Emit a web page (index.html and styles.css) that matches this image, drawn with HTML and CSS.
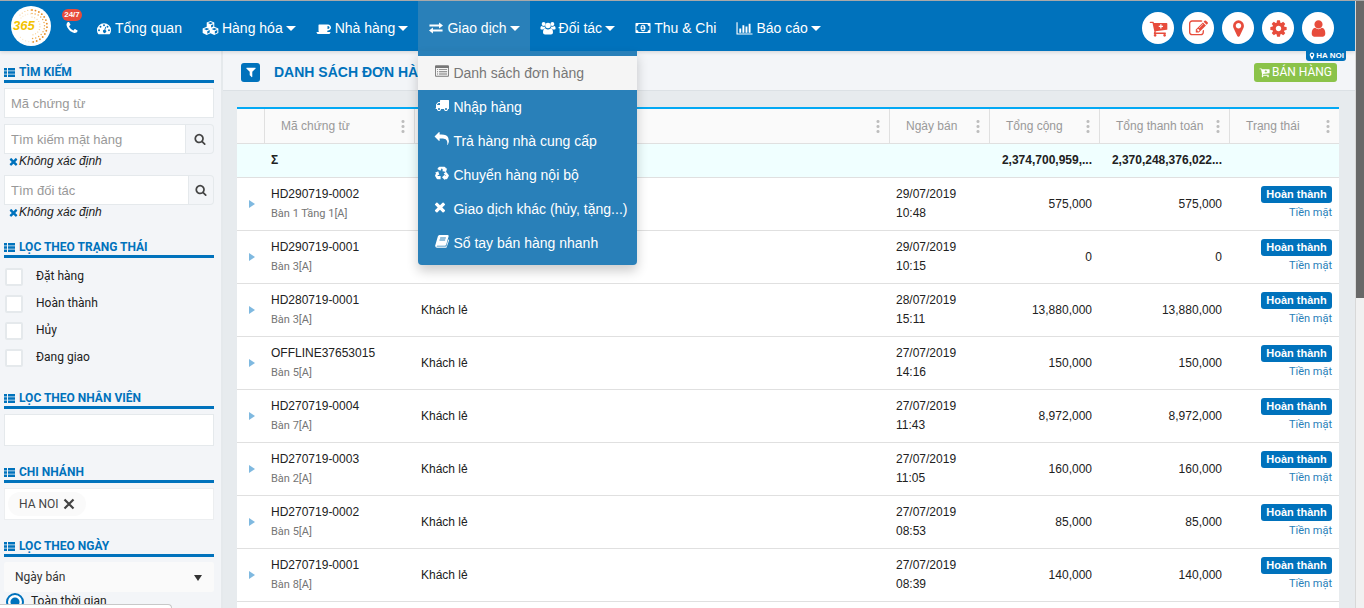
FILE: index.html
```html
<!DOCTYPE html>
<html lang="vi">
<head>
<meta charset="utf-8">
<title>Danh sách đơn hàng</title>
<link rel="stylesheet" href="styles.css">
</head>
<body>
<svg class="sprite" aria-hidden="true">
  <symbol id="phone" viewBox="0 0 1792 1792"><path d="M1600 1240q0 27-10 70.500t-21 68.500q-21 50-122 106-94 51-186 51-27 0-53-3.500t-57.500-12.500-47-14.500-55.500-20.500-49-18q-98-35-175-83-127-79-264-216t-216-264q-48-77-83-175-3-9-18-49t-20.500-55.500-14.500-47-12.500-57.500-3.500-53q0-92 51-186 56-101 106-122 25-11 68.500-21t70.500-10q14 0 21 3 18 6 53 76 11 19 30 54t35 63.500 31 53.500q3 4 17.500 25t21.500 35.500 7 28.500q0 20-28.500 50t-62 55-62 53-28.500 46q0 9 5 22.500t8.500 20.500 14 24 11.500 19q76 137 174 235t235 174q2 1 19 11.500t24 14 20.500 8.500 22.500 5q18 0 46-28.500t53-62 55-62 50-28.500q14 0 28.500 7t35.500 21.500 25 17.500q25 15 53.500 31t63.500 35 54 30q70 35 76 53 3 7 3 21z"/></symbol>
  <symbol id="gauge" viewBox="0 0 16 16"><path fill-rule="evenodd" d="M8 2.500a8 8 0 0 0-8 8 8 8 0 0 0 1.200 4.200q.2.300.5.300h12.600q.3 0 .5-.3A8 8 0 0 0 16 10.500a8 8 0 0 0-8-8zM2.300 9.400a1.100 1.100 0 1 1 0 2.200 1.100 1.100 0 0 1 0-2.200zM4 5.400a1.100 1.100 0 1 1 0 2.200 1.100 1.100 0 0 1 0-2.200zM8 3.700a1.100 1.100 0 1 1 0 2.200 1.100 1.100 0 0 1 0-2.200zM12 5.400a1.100 1.100 0 1 1 0 2.200 1.100 1.100 0 0 1 0-2.200zM13.700 9.400a1.100 1.100 0 1 1 0 2.200 1.100 1.100 0 0 1 0-2.200zM9.500 6.500l.9.300-.9 3.500a1.800 1.800 0 1 1-1-.2z"/></symbol>
  <symbol id="cubes" viewBox="0 0 18 16"><path fill-rule="evenodd" d="M9 .6l4 1.700v4.500l4.300 1.800v4.700L13 15.400l-4-1.900-4 1.900-4.300-2.100V8.600L5 6.800V2.300zM6.400 2.800L9 3.900l2.600-1.100L9 1.700zM9.600 5v2.500l2.300-1V4zM2.100 9.100L5 10.300l2.800-1.200L5 7.900zM5.600 11.400v2.600l2.600-1.300v-2.500zM10.200 9.100l2.800 1.200 2.900-1.200L13 7.900zM13.600 11.400v2.600l2.600-1.300v-2.500z"/></symbol>
  <symbol id="coffee" viewBox="0 0 1920 1792"><path d="M1664 832q0-80-56-136t-136-56h-64v384h64q80 0 136-56t56-136zm-1664 576h1792q0 106-75 181t-181 75h-1280q-106 0-181-75t-75-181zm1856-576q0 159-112.500 271.500t-271.500 112.500h-64v32q0 92-66 158t-158 66h-704q-92 0-158-66t-66-158v-736q0-26 19-45t45-19h1152q159 0 271.500 112.500t112.500 271.500z"/></symbol>
  <symbol id="exchange" viewBox="0 0 16 16"><path d="M.5 4h11V1.600L16 5.100l-4.500 3.500V6.200H.5zM15.500 9.800h-11V7.400L0 10.900l4.500 3.500V12h11z"/></symbol>
  <symbol id="users" viewBox="0 0 18 16"><circle cx="4" cy="3.400" r="2.200"/><circle cx="14" cy="3.400" r="2.200"/><circle cx="9" cy="5.200" r="3.100"/><path d="M1.600 5.600Q3.500 7 5.200 6.200q.2 1.300.9 2.200Q4 8.600 3.400 9.800H1.500Q.3 9.600.3 8.300q0-2.200 1.300-2.700zM16.400 5.600Q14.500 7 12.800 6.200q-.2 1.300-.9 2.200 2.100.2 2.700 1.400h1.900q1.200-.2 1.200-1.500 0-2.200-1.300-2.700zM6.200 8.600q2.800 2 5.600 0 2.900.3 2.900 4.500 0 2.400-2.300 2.400H5.600q-2.300 0-2.300-2.400 0-4.200 2.900-4.500z"/></symbol>
  <symbol id="money" viewBox="0 0 1920 1792"><path d="M768 1152h384v-96h-128v-448h-114l-148 137 77 80q42-37 55-57h2v288h-128v96zm512-256q0 70-21 142t-59.500 134-101.500 101-138 39-138-39-101.500-101-59.500-134-21-142 21-142 59.500-134 101.500-101 138-39 138 39 101.500 101 59.500 134 21 142zm512 256v-512q-106 0-181-75t-75-181h-1152q0 106-75 181t-181 75v512q106 0 181 75t75 181h1152q0-106 75-181t181-75zm128-832v1152q0 26-19 45t-45 19h-1792q-26 0-45-19t-19-45v-1152q0-26 19-45t45-19h1792q26 0 45 19t19 45z"/></symbol>
  <symbol id="chart" viewBox="0 0 18 16"><path d="M.5 2h1.200v11.800H17.500V15H.5zM3.500 8.500h2V13h-2zM6.800 5h2v8h-2zM10.100 6.500h2V13h-2zM13.400 3.500h2V13h-2z"/></symbol>
  <symbol id="list-alt" viewBox="0 0 16 16"><path fill-rule="evenodd" d="M1.200 1.500h13.600q1.200 0 1.200 1.200v10.600q0 1.200-1.200 1.200H1.200Q0 14.500 0 13.300V2.700Q0 1.500 1.200 1.500zM1 4.500v8.800h14V4.500zM2.300 5.600h1.200v1.100H2.300zM4.600 5.600h9.200v1.100H4.600zM2.300 8.200h1.200v1.100H2.300zM4.600 8.200h9.200v1.100H4.600zM2.300 10.800h1.200v1.100H2.300zM4.600 10.800h9.200v1.100H4.600z"/></symbol>
  <symbol id="truck" viewBox="0 0 1792 1792"><path d="M640 1408q0-52-38-90t-90-38-90 38-38 90 38 90 90 38 90-38 38-90zm-384-512h384v-256h-158q-13 0-22 9l-195 195q-9 9-9 22v30zm1280 512q0-52-38-90t-90-38-90 38-38 90 38 90 90 38 90-38 38-90zm256-1088v1024q0 15-4 26.500t-13.500 18.500-16.500 11.500-23.500 6-22.500 2-25.500 0-22.500-.5q0 106-75 181t-181 75-181-75-75-181h-384q0 106-75 181t-181 75-181-75-75-181h-64q-3 0-22.500.5t-25.500 0-22.500-2-23.500-6-16.500-11.500-13.500-18.500-4-26.500q0-26 19-45t45-19v-320q0-8-.5-35t0-38 2.500-34.500 6.500-37 14-30.500 22.500-30l198-198q19-19 50.500-32t58.500-13h160v-192q0-26 19-45t45-19h1024q26 0 45 19t19 45z"/></symbol>
  <symbol id="reply" viewBox="0 0 1792 1792"><path d="M1792 1120q0 166-127 451-3 7-10.500 24t-13.500 30-13 22q-12 17-28 17-15 0-23.500-10t-8.500-25q0-9 2.500-26.500t2.500-23.500q5-68 5-123 0-112-19.500-200.500t-54-153.500-89-112-112-79-142-49.500-164-24.500-181.500-6h-224v256q0 26-19 45t-45 19-45-19l-512-512q-19-19-19-45t19-45l512-512q19-19 45-19t45 19 19 45v256h224q713 0 875 403 53 134 53 333z"/></symbol>
  <symbol id="recycle" viewBox="0 0 16 16"><path d="M5.200.8h5.500q.7 0 1.100.7l.9 1.500 1.200-.7-1.300 4.600-4.700-1.200 1.300-.8L7.800 2.700 6.100 5.500 2.700 3.400l1.400-2Q4.500.8 5.200.8zM3.700 5.900l1.300 4.700-1.300-.7-1 1.500h3.700v3.700H3q-.8 0-1.200-.7L.3 11.700q-.4-.7 0-1.400l.9-1.900L0 7.600zM12.600 6.500L15.600 10.200q.5.700 0 1.500l-1.400 2.700q-.4.700-1.200.7h-1.700v1L8 12.900l3.300-3.300v1.600h1.400L9.900 8.500z"/></symbol>
  <symbol id="times" viewBox="192 192 1408 1408"><path d="M1490 1322q0 40-28 68l-136 136q-28 28-68 28t-68-28l-294-294-294 294q-28 28-68 28t-68-28l-136-136q-28-28-28-68t28-68l294-294-294-294q-28-28-28-68t28-68l136-136q28-28 68-28t68 28l294 294 294-294q28-28 68-28t68 28l136 136q28 28 28 68t-28 68l-294 294 294 294q28 28 28 68z"/></symbol>
  <symbol id="book" viewBox="0 0 16 16"><path fill-rule="evenodd" d="M5 1h9.600q1.400.3 1 1.700l-2.800 9.600q-.4 1.200-1.500 1.200H2.400q-.8 0-.6.500.2.400.9.400h9.500q.7 0 .9-.6l2.200-7.700q.9.500.6 1.500l-2.500 7.200Q13 15.800 12 15.800H2.300Q.4 15.500.2 13.600q0-.8.300-1.400L3.300 2.600Q3.800 1.200 5 1zM6 4l-.3 1h6.500l.3-1zM5.300 6.400l-.3 1h6.500l.3-1z"/></symbol>
  <symbol id="cart" viewBox="0 0 1792 1792"><path d="M704 1536q0 52-38 90t-90 38-90-38-38-90 38-90 90-38 90 38 38 90zm896 0q0 52-38 90t-90 38-90-38-38-90 38-90 90-38 90 38 38 90zm128-1088v512q0 24-16.500 42.500t-40.500 21.500l-1044 122q13 60 13 70 0 16-24 64h920q26 0 45 19t19 45-19 45-45 19h-1024q-26 0-45-19t-19-45q0-11 8-31.500t16-36 21.500-40 15.500-29.500l-177-823h-204q-26 0-45-19t-19-45 19-45 45-19h256q16 0 28.500 6.500t19.500 15.500 13 24.500 8 26 5.500 29.500 4.500 26h1201q26 0 45 19t19 45z"/></symbol>
  <symbol id="edit" viewBox="0 0 1792 1792"><path d="M888 1184l116-116-152-152-116 116v56h96v96h56zm440-720q-16-16-33 1l-350 350q-17 17-1 33t33-1l350-350q17-17 1-33zm80 594v190q0 119-84.500 203.500t-203.500 84.500h-832q-119 0-203.500-84.500t-84.500-203.500v-832q0-119 84.500-203.500t203.500-84.500h832q63 0 117 25 15 7 18 23 3 17-9 29l-49 49q-14 14-32 8-23-6-45-6h-832q-66 0-113 47t-47 113v832q0 66 47 113t113 47h832q66 0 113-47t47-113v-126q0-13 9-22l64-64q15-15 35-7t20 29zm-96-738l288 288-672 672h-288v-288zm444 132l-92 92-288-288 92-92q28-28 68-28t68 28l152 152q28 28 28 68t-28 68z"/></symbol>
  <symbol id="marker" viewBox="0 0 1792 1792"><path d="M1152 640q0-106-75-181t-181-75-181 75-75 181 75 181 181 75 181-75 75-181zm256 0q0 109-33 179l-364 774q-16 33-47.500 52t-67.500 19-67.500-19-46.500-52l-365-774q-33-70-33-179 0-212 150-362t362-150 362 150 150 362z"/></symbol>
  <symbol id="cog" viewBox="0 0 1792 1792"><path d="M1152 896q0-106-75-181t-181-75-181 75-75 181 75 181 181 75 181-75 75-181zm512-109v222q0 12-8 23t-20 13l-185 28q-19 54-39 91 35 50 107 138 10 12 10 25t-9 23q-27 37-99 108t-94 71q-12 0-26-9l-138-108q-44 23-91 38-16 136-29 186-7 28-36 28h-222q-14 0-24.500-8.500t-11.500-21.500l-28-184q-49-16-90-37l-141 107q-10 9-25 9-14 0-25-11-126-114-165-168-7-10-7-23 0-12 8-23 15-21 51-66.500t54-70.500q-27-50-41-99l-183-27q-13-2-21-12.500t-8-23.500v-222q0-12 8-23t19-13l186-28q14-46 39-92-40-57-107-138-10-12-10-24 0-10 9-23 26-36 98.500-107.500t94.500-71.500q13 0 26 10l138 107q44-23 91-38 16-136 29-186 7-28 36-28h222q14 0 24.500 8.500t11.500 21.500l28 184q49 16 90 37l142-107q9-9 24-9 13 0 25 10 129 119 165 170 7 8 7 22 0 12-8 23-15 21-51 66.500t-54 70.500q26 50 41 98l183 28q13 2 21 12.500t8 23.500z"/></symbol>
  <symbol id="user" viewBox="0 0 1792 1792"><path d="M1536 1399q0 109-62.500 187t-150.500 78h-854q-88 0-150.500-78t-62.500-187q0-85 8.500-160.500t31.500-152 58.500-131 94-89 134.500-34.500q131 128 313 128t313-128q76 0 134.500 34.500t94 89 58.500 131 31.500 152 8.500 160.500zm-256-887q0 159-112.500 271.500t-271.500 112.500-271.500-112.500-112.500-271.500 112.500-271.500 271.500-112.500 271.500 112.500 112.500 271.500z"/></symbol>
  <symbol id="filter" viewBox="0 0 1792 1792"><path d="M1595 295q17 41-14 70l-493 493v742q0 42-39 59-13 5-25 5-27 0-45-19l-256-256q-19-19-19-45v-486l-493-493q-31-29-14-70 17-39 59-39h1280q42 0 59 39z"/></symbol>
  <symbol id="search" viewBox="0 0 1792 1792"><path d="M1216 832q0-185-131.500-316.500t-316.500-131.500-316.500 131.500-131.500 316.500 131.500 316.500 316.500 131.500 316.500-131.500 131.500-316.500zm512 832q0 52-38 90t-90 38q-54 0-90-38l-343-342q-179 124-399 124-143 0-273.500-55.500t-225-150-150-225-55.500-273.500 55.500-273.500 150-225 225-150 273.500-55.500 273.500 55.500 225 150 150 225 55.500 273.500q0 220-124 399l343 343q37 37 37 90z"/></symbol>
  <symbol id="th-list" viewBox="0 0 11 9"><path d="M0 0h3v2.400H0zM4 0h7v2.400H4zM0 3.300h3v2.400H0zM4 3.300h7v2.400H4zM0 6.600h3V9H0zM4 6.600h7V9H4z"/></symbol>
  <symbol id="cross" viewBox="0 0 12 12"><path d="M1.500 1.500l9 9M10.500 1.500l-9 9" stroke="currentColor" stroke-width="2.200"/></symbol>
</svg>

<div class="window">
  <div class="app">
    <header class="topbar">
      <a class="logo" href="#" aria-label="365">
        <svg viewBox="0 0 40 40" width="40" height="40">
          <circle cx="20" cy="20" r="20" fill="#fff"/>
          <g fill="none" stroke-linecap="round">
            <path d="M9 9a16 16 0 0 1 12-5" stroke="#f5c98a" stroke-width="1.200" stroke-dasharray="0 3"/>
            <path d="M10 12a13 13 0 0 1 11-4" stroke="#f7d9a8" stroke-width="1" stroke-dasharray="0 2.600"/>
            <path d="M21 4a16 16 0 0 1 15 16 16 16 0 0 1-15 16" stroke="#e8922e" stroke-width="1.900" stroke-dasharray="0 3.600"/>
            <path d="M21 7.500a12.500 12.500 0 0 1 0 25" stroke="#f0a848" stroke-width="1.500" stroke-dasharray="0 3.200"/>
            <path d="M21 11a9 9 0 0 1 8 9 9 9 0 0 1-8 9" stroke="#f5c070" stroke-width="1.100" stroke-dasharray="0 2.800"/>
            <path d="M21 36a16 16 0 0 1-12-5" stroke="#f5d9b0" stroke-width="1" stroke-dasharray="0 3.200"/>
          </g>
          <path d="M2 14h23v12H2z" fill="#fff"/>
          <text x="2" y="24" class="logo-text">365</text>
        </svg>
      </a>
      <a class="hotline" href="#" aria-label="Hotline"><svg class="ico"><use href="#phone"/></svg><span class="hot-badge">24/7</span></a>
      <nav class="menu">
        <ul class="menu-list">
          <li><a class="menu-link" href="#"><svg class="ico"><use href="#gauge"/></svg>Tổng quan</a></li>
          <li><a class="menu-link" href="#"><svg class="ico wide"><use href="#cubes"/></svg>Hàng hóa<i class="caret"></i></a></li>
          <li><a class="menu-link" href="#"><svg class="ico"><use href="#coffee"/></svg>Nhà hàng<i class="caret"></i></a></li>
          <li class="open"><a class="menu-link" href="#"><svg class="ico"><use href="#exchange"/></svg>Giao dịch<i class="caret"></i></a>
            <ul class="dropdown">
              <li><a class="drop-link current" href="#"><svg class="ico"><use href="#list-alt"/></svg>Danh sách đơn hàng</a></li>
              <li><a class="drop-link" href="#"><svg class="ico"><use href="#truck"/></svg>Nhập hàng</a></li>
              <li><a class="drop-link" href="#"><svg class="ico"><use href="#reply"/></svg>Trả hàng nhà cung cấp</a></li>
              <li><a class="drop-link" href="#"><svg class="ico"><use href="#recycle"/></svg>Chuyển hàng nội bộ</a></li>
              <li><a class="drop-link" href="#"><svg class="ico small"><use href="#times"/></svg>Giao dịch khác (hủy, tặng...)</a></li>
              <li><a class="drop-link" href="#"><svg class="ico"><use href="#book"/></svg>Sổ tay bán hàng nhanh</a></li>
            </ul>
          </li>
          <li><a class="menu-link" href="#"><svg class="ico"><use href="#users"/></svg>Đối tác<i class="caret"></i></a></li>
          <li><a class="menu-link" href="#"><svg class="ico"><use href="#money"/></svg>Thu &amp; Chi</a></li>
          <li><a class="menu-link" href="#"><svg class="ico wide"><use href="#chart"/></svg>Báo cáo<i class="caret"></i></a></li>
        </ul>
      </nav>
      <div class="actions">
        <button class="round" aria-label="Bán hàng"><svg viewBox="0 0 1792 1792"><use href="#cart"/><path d="M1060 500h120v140h140v120h-140v140h-120v-140h-140v-120h140z" fill="#fff"/></svg></button>
        <button class="round" aria-label="Ghi chú"><svg><use href="#edit"/></svg></button>
        <button class="round" aria-label="Chi nhánh"><svg><use href="#marker"/></svg></button>
        <button class="round" aria-label="Cài đặt"><svg><use href="#cog"/></svg></button>
        <button class="round" aria-label="Tài khoản"><svg><use href="#user"/></svg></button>
      </div>
      <span class="branch-tag"><svg><use href="#marker"/></svg>HA NOI</span>
    </header>

    <div class="body">
      <aside class="sidebar">
        <section class="panel">
          <h2 class="panel-title"><svg><use href="#th-list"/></svg>TÌM KIẾM</h2>
          <input class="field" type="text" placeholder="Mã chứng từ" aria-label="Mã chứng từ">
          <div class="group">
            <input class="field" type="text" placeholder="Tìm kiếm mặt hàng" aria-label="Tìm kiếm mặt hàng">
            <button class="group-btn" aria-label="Tìm mặt hàng"><svg><use href="#search"/></svg></button>
          </div>
          <p class="hint"><svg><use href="#times"/></svg>Không xác định</p>
          <div class="group">
            <input class="field" type="text" placeholder="Tìm đối tác" aria-label="Tìm đối tác">
            <button class="group-btn slim" aria-label="Tìm đối tác"><svg><use href="#search"/></svg></button>
          </div>
          <p class="hint"><svg><use href="#times"/></svg>Không xác định</p>
        </section>
        <section class="panel">
          <h2 class="panel-title"><svg><use href="#th-list"/></svg>LỌC THEO TRẠNG THÁI</h2>
          <div class="checks">
            <label class="check"><input type="checkbox">Đặt hàng</label>
            <label class="check"><input type="checkbox">Hoàn thành</label>
            <label class="check"><input type="checkbox">Hủy</label>
            <label class="check"><input type="checkbox">Đang giao</label>
          </div>
        </section>
        <section class="panel">
          <h2 class="panel-title"><svg><use href="#th-list"/></svg>LỌC THEO NHÂN VIÊN</h2>
          <input class="field tall" type="text" aria-label="Nhân viên">
        </section>
        <section class="panel">
          <h2 class="panel-title"><svg><use href="#th-list"/></svg>CHI NHÁNH</h2>
          <div class="tags"><span class="tag">HA NOI<button class="tag-x" aria-label="Xóa HA NOI"><svg><use href="#cross"/></svg></button></span></div>
        </section>
        <section class="panel">
          <h2 class="panel-title"><svg><use href="#th-list"/></svg>LỌC THEO NGÀY</h2>
          <div class="pick"><select aria-label="Loại ngày"><option>Ngày bán</option></select></div>
          <label class="radio"><input type="radio" name="range" checked>Toàn thời gian</label>
        </section>
      </aside>

      <main class="main">
        <div class="page-head">
          <button class="filter-btn" aria-label="Lọc"><svg><use href="#filter"/></svg></button>
          <h1 class="page-title">DANH SÁCH ĐƠN HÀNG</h1>
          <button class="sell"><svg viewBox="0 0 1792 1792"><use href="#cart"/><path d="M1060 500h120v140h140v120h-140v140h-120v-140h-140v-120h140z" fill="#8bc34a"/></svg>BÁN HÀNG</button>
        </div>
        <div class="grid-wrap">
          <table class="grid">
            <colgroup><col class="c-arrow"><col class="c-code"><col><col class="c-date"><col class="c-total"><col class="c-pay"><col class="c-state"></colgroup>
            <thead>
              <tr>
                <th></th>
                <th><div class="th">Mã chứng từ<i class="dots"></i></div></th>
                <th><div class="th end"><i class="dots"></i></div></th>
                <th><div class="th">Ngày bán<i class="dots"></i></div></th>
                <th><div class="th">Tổng cộng<i class="dots"></i></div></th>
                <th><div class="th">Tổng thanh toán<i class="dots"></i></div></th>
                <th><div class="th">Trạng thái<i class="dots"></i></div></th>
              </tr>
            </thead>
            <tbody>
              <tr class="sum"><td></td><td>Σ</td><td></td><td></td><td class="num">2,374,700,959,...</td><td class="num">2,370,248,376,022...</td><td></td></tr>
              <tr><td><i class="arrow"></i></td><td>HD290719-0002<small>Bàn 1 Tầng 1[A]</small></td><td></td><td>29/07/2019<br>10:48</td><td class="num">575,000</td><td class="num">575,000</td><td class="state"><span class="badge">Hoàn thành</span><a href="#">Tiền mặt</a></td></tr>
              <tr><td><i class="arrow"></i></td><td>HD290719-0001<small>Bàn 3[A]</small></td><td></td><td>29/07/2019<br>10:15</td><td class="num">0</td><td class="num">0</td><td class="state"><span class="badge">Hoàn thành</span><a href="#">Tiền mặt</a></td></tr>
              <tr><td><i class="arrow"></i></td><td>HD280719-0001<small>Bàn 3[A]</small></td><td>Khách lẻ</td><td>28/07/2019<br>15:11</td><td class="num">13,880,000</td><td class="num">13,880,000</td><td class="state"><span class="badge">Hoàn thành</span><a href="#">Tiền mặt</a></td></tr>
              <tr><td><i class="arrow"></i></td><td>OFFLINE37653015<small>Bàn 5[A]</small></td><td>Khách lẻ</td><td>27/07/2019<br>14:16</td><td class="num">150,000</td><td class="num">150,000</td><td class="state"><span class="badge">Hoàn thành</span><a href="#">Tiền mặt</a></td></tr>
              <tr><td><i class="arrow"></i></td><td>HD270719-0004<small>Bàn 7[A]</small></td><td>Khách lẻ</td><td>27/07/2019<br>11:43</td><td class="num">8,972,000</td><td class="num">8,972,000</td><td class="state"><span class="badge">Hoàn thành</span><a href="#">Tiền mặt</a></td></tr>
              <tr><td><i class="arrow"></i></td><td>HD270719-0003<small>Bàn 2[A]</small></td><td>Khách lẻ</td><td>27/07/2019<br>11:05</td><td class="num">160,000</td><td class="num">160,000</td><td class="state"><span class="badge">Hoàn thành</span><a href="#">Tiền mặt</a></td></tr>
              <tr><td><i class="arrow"></i></td><td>HD270719-0002<small>Bàn 5[A]</small></td><td>Khách lẻ</td><td>27/07/2019<br>08:53</td><td class="num">85,000</td><td class="num">85,000</td><td class="state"><span class="badge">Hoàn thành</span><a href="#">Tiền mặt</a></td></tr>
              <tr><td><i class="arrow"></i></td><td>HD270719-0001<small>Bàn 8[A]</small></td><td>Khách lẻ</td><td>27/07/2019<br>08:39</td><td class="num">140,000</td><td class="num">140,000</td><td class="state"><span class="badge">Hoàn thành</span><a href="#">Tiền mặt</a></td></tr>
              <tr><td></td><td></td><td></td><td></td><td></td><td></td><td></td></tr>
            </tbody>
          </table>
        </div>
      </main>
    </div>
  </div>
  <div class="scroll"><div class="thumb"></div></div>
  <div class="status"></div>
</div>
</body>
</html>
```

FILE: styles.css
```css
* { box-sizing: border-box; }
html, body { height: 100%; }
body {
  margin: 0;
  overflow: hidden;
  font: 12px/19px Roboto, "Liberation Sans", sans-serif;
  color: #212121;
  background: #e7ebee;
}
ul { list-style: none; margin: 0; padding: 0; }
a { text-decoration: none; }
button { border: 0; padding: 0; font: inherit; cursor: pointer; }
svg { fill: currentColor; flex: none; }
.sprite { position: absolute; width: 0; height: 0; }

.window {
  height: 100vh;
  display: grid;
  grid-template-columns: minmax(0, 1fr) 9px;
  border-top: 1px solid #a9a9a9;
  overflow: hidden;
}
.app { display: flex; flex-direction: column; min-height: 0; overflow: hidden; }
.scroll { background: #f1f1f1; border-left: 1px solid #d8d8d8; }
.thumb { height: 49%; background: #686868; }
.status {
  position: absolute;
  left: 0;
  bottom: 0;
  width: 172px;
  height: 4px;
  background: #fff;
  border: 1px solid #c8c8c8;
  border-width: 1px 1px 0 0;
  border-radius: 0 4px 0 0;
}

/* top bar */
.topbar {
  position: relative;
  z-index: 2;
  display: flex;
  flex: none;
  height: 50px;
  padding: 0 21px 0 11px;
  background: #0072bc;
  color: #fff;
  font: 14px/20px "Liberation Sans", Arial, sans-serif;
  box-shadow: 0 1px 4px rgba(0, 0, 0, .15);
}
.logo { align-self: center; height: 40px; }
.logo-text { font: italic bold 13px "Liberation Sans", Arial, sans-serif; fill: #f2c200; }
.hotline {
  position: relative;
  display: flex;
  align-items: center;
  width: 35px;
  padding: 4px 0 0 13px;
  color: #fff;
}
.hot-badge {
  position: absolute;
  left: 11px;
  top: 8px;
  width: 20px;
  border-radius: 6px;
  background: #e74c3c;
  font: bold 8px/12px "Liberation Sans", Arial, sans-serif;
  text-align: center;
}
.ico { width: 16px; height: 14px; }
.menu-list { display: flex; height: 100%; }
.menu-list > li { position: relative; }
.menu-link {
  display: flex;
  align-items: center;
  gap: 3px;
  height: 100%;
  padding: 4px 10px 0;
  color: #fff;
}
.menu-link .wide { width: 17px; height: 16px; }
.caret {
  border: 5px solid transparent;
  border-top-color: #fff;
  border-bottom: 0;
}
.open > .menu-link { background: #2980b9; }
.dropdown {
  position: absolute;
  top: 100%;
  left: 0;
  min-width: 219px;
  padding: 5px 0;
  background: #2980b9;
  border-radius: 0 0 4px 4px;
  box-shadow: 0 6px 12px rgba(0, 0, 0, .2);
}
.drop-link {
  display: flex;
  align-items: center;
  gap: 3px;
  height: 34px;
  padding: 0 9px 0 16px;
  color: #fff;
  white-space: nowrap;
}
.drop-link .ico { margin-bottom: 4px; }
.drop-link .small { width: 12px; height: 12px; margin-right: 4px; }
.drop-link.current { background: #f5f5f5; color: #777; }
.actions { display: flex; align-items: center; gap: 8px; margin-left: auto; padding-top: 4px; }
.round {
  display: grid;
  place-items: center;
  width: 32px;
  height: 32px;
  border-radius: 50%;
  background: #fff;
  color: #e74c3c;
}
.round svg { width: 19px; height: 19px; }
.branch-tag {
  position: absolute;
  top: 100%;
  right: 9px;
  display: flex;
  align-items: center;
  padding: 0 2px;
  background: #0072bc;
  border-radius: 0 0 3px 3px;
  font: bold 8px/10px "Liberation Sans", Arial, sans-serif;
}
.branch-tag svg { width: 8px; height: 8px; }

/* sidebar */
.body { display: grid; grid-template-columns: 223px minmax(0, 1fr); flex: 1; min-height: 0; }
.sidebar {
  padding: 10px 7px 0 4px;
  background: #f3f5f8;
  border-right: 2px solid #e5e9ec;
  overflow: hidden;
}
.panel { margin-bottom: 16px; }
.panel-title {
  display: flex;
  align-items: center;
  gap: 4px;
  margin: 0 0 5px;
  padding-top: 4px;
  border-bottom: 3px solid #0072bc;
  color: #0072bc;
  font: bold 12px/15px Roboto, sans-serif;
}
.panel-title svg { width: 11px; height: 9px; }
.field {
  display: block;
  width: 100%;
  height: 30px;
  padding: 0 6px;
  border: 1px solid #e5e9ec;
  border-radius: 0;
  background: #fff;
  font: 13px "Liberation Sans", Arial, sans-serif;
  color: #333;
}
.field::placeholder { color: #999; opacity: 1; }
.field.tall { height: 32px; }
.group { display: flex; margin-top: 6px; }
.group .field { flex: 1; min-width: 0; }
.group-btn {
  display: grid;
  place-items: center;
  width: 28px;
  border: 1px solid #e5e9ec;
  border-left: 0;
  border-radius: 0 4px 4px 0;
  background: #f3f5f8;
  color: #444;
}
.group-btn.slim { width: 25px; }
.group-btn svg { width: 12px; height: 12px; }
.hint {
  display: flex;
  align-items: center;
  gap: 1px;
  margin: 0;
  padding-left: 5px;
  font: italic 12px/15px "Liberation Sans", Arial, sans-serif;
}
.hint svg { width: 9px; height: 9px; color: #0072bc; }
.check { display: flex; align-items: center; gap: 12px; height: 27px; }
.check input {
  appearance: none;
  width: 18px;
  height: 18px;
  margin: 0 1px;
  border: 2px solid #e5e9ec;
  border-radius: 2px;
  background: #fff;
}
.tags { padding: 3px; height: 32px; background: #fff; border: 1px solid #eceef0; }
.tag {
  display: inline-flex;
  align-items: center;
  gap: 4px;
  height: 24px;
  padding: 0 11px;
  border-radius: 12px;
  background: #fafafa;
  color: #444;
}
.tag-x { display: flex; background: none; color: #444; }
.tag-x svg { width: 12px; height: 12px; }
.tall, .tags { margin-bottom: -1px; }
.pick { position: relative; }
.pick select {
  appearance: none;
  display: block;
  width: 100%;
  height: 30px;
  padding: 0 11px;
  border: 0;
  border-radius: 2px;
  background: #fafafa;
  font: 12px Roboto, sans-serif;
  color: #333;
}
.pick::after {
  content: "";
  position: absolute;
  right: 12px;
  top: 13px;
  border: 4px solid transparent;
  border-top: 6px solid #333;
  border-bottom: 0;
}
.radio { display: flex; align-items: center; gap: 7px; padding-left: 2px; }
.radio input {
  appearance: none;
  width: 18px;
  height: 18px;
  margin: 0;
  border: 2px solid #0072bc;
  border-radius: 50%;
  background: radial-gradient(circle, #0072bc 4px, #fff 5px);
}

/* content */
.main { min-width: 0; overflow: hidden; }
.page-head {
  display: flex;
  align-items: center;
  gap: 14px;
  height: 40px;
  padding: 3px 18px 0 18px;
  background: #f3f5f8;
  border-bottom: 1px solid #dce1e5;
}
.filter-btn {
  display: grid;
  place-items: center;
  width: 19px;
  height: 19px;
  border-radius: 3px;
  background: #0072bc;
  color: #fff;
}
.filter-btn svg { width: 12px; height: 12px; }
.page-title { margin: 0; color: #0072bc; font: bold 14px/20px "Liberation Sans", Arial, sans-serif; }
.sell {
  display: flex;
  align-items: center;
  gap: 2px;
  margin-left: auto;
  padding: 0 5px;
  border-radius: 3px;
  background: #8bc34a;
  color: #fff;
}
.sell svg { width: 11px; height: 11px; }
.grid-wrap { padding: 16px 16px 0 14px; }
.grid {
  width: 100%;
  table-layout: fixed;
  border-collapse: separate;
  border-spacing: 0;
  border-top: 2px solid #03a9f4;
  background: #fff;
  font-family: "Liberation Sans", Arial, sans-serif;
}
.c-arrow { width: 28px; }
.c-code { width: 150px; }
.c-date { width: 100px; }
.c-total { width: 110px; }
.c-pay { width: 130px; }
.c-state { width: 109px; }
.grid th {
  height: 35px;
  padding: 0 9px 0 16px;
  background: #fafafa;
  border-right: 1px solid #e0e0e0;
  border-bottom: 1px solid #e0e0e0;
  color: #999;
  font-weight: 400;
  text-align: left;
}
.grid th:last-child { border-right: 0; }
.th { display: flex; align-items: center; justify-content: space-between; white-space: nowrap; }
.th.end { justify-content: flex-end; }
.dots {
  width: 4px;
  height: 15px;
  background: radial-gradient(circle, #bdbdbd 1px, transparent 2px) 0 0 / 4px 5px;
}
.grid td {
  height: 53px;
  padding: 0 7px 0 6px;
  border-bottom: 1px solid #e0e0e0;
}
.grid .sum td { height: 34px; background: #f0ffff; font-weight: 700; white-space: nowrap; }
.grid small { display: block; font: 11px/19px Roboto, sans-serif; color: #757575; }
.grid .num { text-align: right; }
.arrow {
  display: block;
  width: 0;
  margin-left: 6px;
  border: 4px solid transparent;
  border-left: 6px solid #7fb9e0;
  border-right: 0;
}
.grid .num, .grid .sum td { padding-right: 8px; }
.state { text-align: right; }
.badge {
  display: block;
  width: 71px;
  margin-left: auto;
  border-radius: 3px;
  background: #0072bc;
  color: #fff;
  font: bold 11px/17px "Liberation Sans", Arial, sans-serif;
  text-align: center;
}
.state a { display: block; font: 11px/20px Roboto, sans-serif; color: #2980b9; }
```
